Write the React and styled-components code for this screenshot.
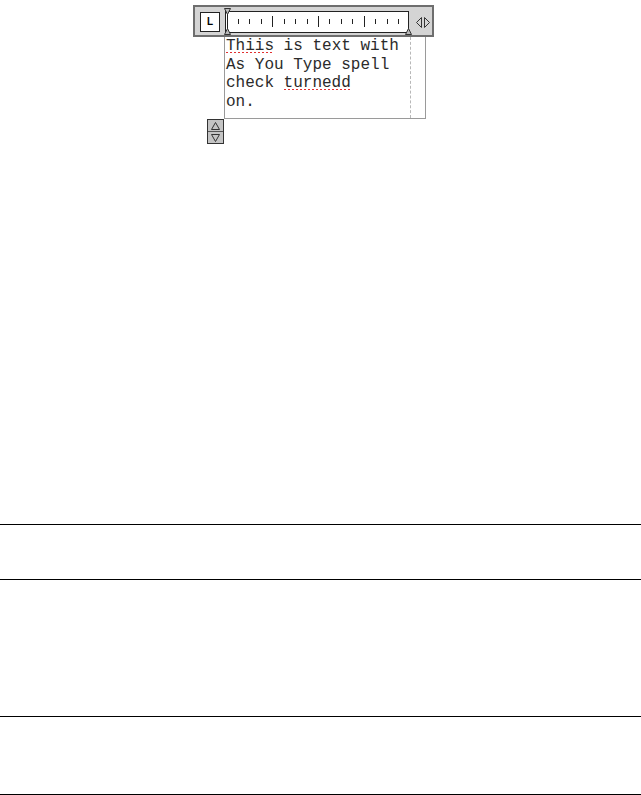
import styled, { createGlobalStyle } from 'styled-components'

const GlobalStyle = createGlobalStyle`
  html, body {
    margin: 0;
    padding: 0;
    background: #ffffff;
  }
  body {
    font-family: 'Liberation Sans', Arial, sans-serif;
  }
`

const Page = styled.div`
  width: 641px;
  height: 795px;
  display: flex;
  flex-direction: column;
  overflow: hidden;
`

const EditorArea = styled.div`
  height: 524px;
  box-sizing: border-box;
  padding: 5px 0 0 193px;
  display: flex;
  flex-direction: column;
  align-items: flex-start;
`

const Toolbar = styled.div`
  width: 241px;
  height: 32px;
  box-sizing: border-box;
  background: #d4d4d4;
  border: 2px solid #6e6e6e;
  display: flex;
  align-items: center;
  padding-left: 5px;
`

const TabKind = styled.div`
  width: 20px;
  height: 20px;
  box-sizing: border-box;
  background: #ffffff;
  border: 1px solid #222;
  display: flex;
  align-items: center;
  justify-content: center;
  font-family: 'Liberation Sans', Arial, sans-serif;
  font-weight: bold;
  font-size: 10px;
  line-height: 1;
  color: #000;
  margin-top: 2px;
`

const Ruler = styled.div`
  position: relative;
  width: 184px;
  height: 22px;
  box-sizing: border-box;
  margin-left: 5px;
  margin-top: 2px;
  background: #ffffff;
  border: 1px solid #222;

  svg {
    position: absolute;
    left: -1px;
    top: -1px;
    overflow: visible;
  }
`

const Scroll = styled.svg`
  flex: none;
  margin-left: 7px;
  margin-top: 2px;
`

const TextBox = styled.div`
  margin-left: 31px;
  width: 202px;
  height: 82px;
  box-sizing: border-box;
  border: 1px solid #9a9a9a;
  border-top: none;
  display: flex;
`

const TextColumn = styled.div`
  width: 186px;
  height: 100%;
  box-sizing: border-box;
  border-right: 1px dashed #b8b8b8;
  padding-left: 1px;
  font-family: 'Liberation Mono', 'DejaVu Sans Mono', monospace;
  font-size: 16px;
  line-height: 18.5px;
  color: #2b2b2b;
  white-space: pre;
`

const Line = styled.div``

const Misspelled = styled.span`
  background-image: repeating-linear-gradient(to right, #e23030 0 2px, transparent 2px 4px);
  background-repeat: no-repeat;
  background-size: 100% 1px;
  background-position: 0 calc(100% - 2px);
`

const Spinner = styled.div`
  margin-left: 14px;
  width: 17px;
  height: 25px;
  box-sizing: border-box;
  background: #c4c4c4;
  border: 1px solid #333;
  display: flex;
  flex-direction: column;
`

const SpinHalf = styled.div`
  flex: 1;
  display: flex;
  align-items: center;
  justify-content: center;
  border-top: ${(p) => (p.$divided ? '1px solid #555' : 'none')};
`

const Section = styled.div`
  height: ${(p) => p.$h}px;
  flex: none;
  box-sizing: border-box;
  border-top: 1px solid #000;
`

const ticks = Array.from({ length: 15 }, (_, i) => ({
  x: Math.round(13 + i * 11.43) + 0.5,
  long: i % 4 === 3
}))

const RulerMarks = () => (
  <svg width="184" height="22" viewBox="0 0 184 22">
    {ticks.map((t, i) => (
      <line
        key={i}
        x1={t.x}
        x2={t.x}
        y1={t.long ? 5 : 8}
        y2={t.long ? 16 : 13}
        stroke="#222"
        strokeWidth="1"
      />
    ))}
    <line x1="2.5" x2="2.5" y1="3" y2="18" stroke="#222" strokeWidth="1" />
    <polygon points="-0.5,-2.5 5.5,-2.5 2.5,3.5" fill="#b8b8b8" stroke="#333" strokeWidth="1" />
    <polygon points="-0.5,23.5 5.5,23.5 2.5,17.5" fill="#b8b8b8" stroke="#333" strokeWidth="1" />
    <polygon points="180.5,23.5 186.5,23.5 183.5,17.5" fill="#b8b8b8" stroke="#333" strokeWidth="1" />
  </svg>
)

const Triangle = ({ up }) => (
  <svg width="9" height="8" viewBox="0 0 9 8">
    <polygon
      points={up ? '4.5,0.5 8.5,7.5 0.5,7.5' : '0.5,0.5 8.5,0.5 4.5,7.5'}
      fill="none"
      stroke="#333"
      strokeWidth="1"
    />
  </svg>
)

export default function App() {
  return (
    <>
      <GlobalStyle />
      <Page>
        <EditorArea>
          <Toolbar>
            <TabKind>L</TabKind>
            <Ruler>
              <RulerMarks />
            </Ruler>
            <Scroll width="14" height="11" viewBox="0 0 14 11">
              <path d="M5.5 0.5 L5.5 10.5 L0.5 5.5 Z" fill="none" stroke="#333" strokeWidth="1" strokeLinejoin="miter" />
              <path d="M8.5 0.5 L8.5 10.5 L13.5 5.5 Z" fill="none" stroke="#333" strokeWidth="1" strokeLinejoin="miter" />
            </Scroll>
          </Toolbar>
          <TextBox>
            <TextColumn>
              <Line><Misspelled>Thiis</Misspelled> is text with</Line>
              <Line>As You Type spell</Line>
              <Line>check <Misspelled>turnedd</Misspelled></Line>
              <Line>on.</Line>
            </TextColumn>
          </TextBox>
          <Spinner>
            <SpinHalf>
              <Triangle up />
            </SpinHalf>
            <SpinHalf $divided>
              <Triangle />
            </SpinHalf>
          </Spinner>
        </EditorArea>
        <Section $h={55} />
        <Section $h={137} />
        <Section $h={78} />
        <Section $h={1} />
      </Page>
    </>
  )
}
